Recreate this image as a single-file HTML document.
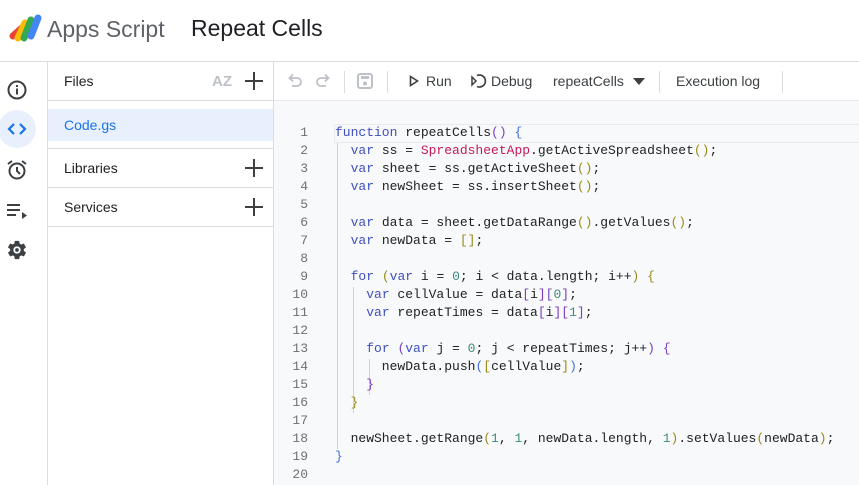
<!DOCTYPE html><html><head><style>
*{margin:0;padding:0;box-sizing:border-box}
body{width:859px;height:485px;overflow:hidden;background:#fff;font-family:"Liberation Sans",sans-serif;color:#3c4043;position:relative}
.a{position:absolute}
.code{font-family:"Liberation Mono",monospace;font-size:13px;color:#202124}
.ln{position:absolute;left:276px;width:32px;text-align:right;color:#6e7072;font-family:"Liberation Mono",monospace;font-size:13px;line-height:18px}
.l{position:absolute;left:335px;white-space:pre;height:18px;line-height:18px}
.k{color:#3f4fc0}.s{color:#c2185b}.n{color:#3d8b7d}.b1{color:#3f6fd8}.b2{color:#9a8a1a}.b3{color:#7b3fc0}
</style></head><body>
<!-- header -->
<svg class="a" style="left:9px;top:14px" width="34" height="30" viewBox="0 0 34 30">
<path d="M4 22 L13 14" stroke="#ea4335" stroke-width="7" stroke-linecap="round"/>
<path d="M9 24 L16 9" stroke="#fbbc04" stroke-width="7" stroke-linecap="round"/>
<path d="M15 24 L22 6" stroke="#34a853" stroke-width="7" stroke-linecap="round"/>
<path d="M22 22 L29 4" stroke="#4285f4" stroke-width="7" stroke-linecap="round"/>
</svg>
<div class="a" style="left:47px;top:16px;font-size:23px;color:#5f6368">Apps Script</div>
<div class="a" style="left:191px;top:15px;font-size:23px;color:#202124">Repeat Cells</div>
<div class="a" style="left:0;top:61px;width:859px;height:1px;background:#dadce0"></div>
<!-- rail -->
<div class="a" style="left:47px;top:62px;width:1px;height:423px;background:#dadce0"></div>
<svg class="a" style="left:6px;top:79px" width="22" height="22" viewBox="0 0 22 22"><circle cx="11" cy="11" r="8.5" fill="none" stroke="#3c4043" stroke-width="2"/><rect x="10" y="9.5" width="2" height="6" fill="#3c4043"/><rect x="10" y="6" width="2" height="2" fill="#3c4043"/></svg>
<div class="a" style="left:-2px;top:110px;width:38px;height:38px;border-radius:50%;background:#e8f0fe"></div>
<svg class="a" style="left:6px;top:119px" width="22" height="20" viewBox="0 0 22 20"><path d="M8 5 L3 10 L8 15 M14 5 L19 10 L14 15" fill="none" stroke="#1a73e8" stroke-width="2.2"/></svg>
<svg class="a" style="left:6px;top:159px" width="22" height="22" viewBox="0 0 22 22"><circle cx="11" cy="12" r="7.5" fill="none" stroke="#3c4043" stroke-width="2"/><path d="M11 8 V12 L14 15 M2 5 L6 2 M20 5 L16 2" fill="none" stroke="#3c4043" stroke-width="2"/></svg>
<svg class="a" style="left:7px;top:202px" width="22" height="18" viewBox="0 0 22 18"><path d="M0 3 H13 M0 8 H13 M0 13 H9" stroke="#3c4043" stroke-width="2"/><path d="M15 10 L20 13.5 L15 17Z" fill="#3c4043"/></svg>
<svg class="a" style="left:6px;top:239px" width="22" height="22" viewBox="0 0 24 24"><path fill="#3c4043" d="M19.4 13c.04-.3.06-.6.06-1s-.02-.7-.06-1l2.1-1.6c.2-.15.24-.42.12-.64l-2-3.460c-.12-.22-.39-.3-.61-.22l-2.5 1c-.52-.4-1.08-.73-1.690-.98l-.38-2.650A.49.49 0 0 0 14 2h-4c-.25 0-.46.18-.49.42l-.38 2.65c-.61.25-1.17.59-1.69.98l-2.5-1c-.23-.09-.49 0-.61.22l-2 3.46c-.13.22-.07.49.12.64L4.57 11c-.04.3-.07.7-.07 1s.02.7.06 1l-2.1 1.6c-.2.15-.25.42-.12.64l2 3.46c.12.22.39.3.61.22l2.5-1c.52.4 1.08.73 1.69.98l.38 2.65c.03.24.24.42.49.42h4c.25 0 .46-.18.49-.42l.38-2.65c.61-.25 1.170-.59 1.690-.98l2.5 1c.23.09.49 0 .61-.22l2-3.46c.12-.22.07-.49-.12-.64L19.4 13zM12 16a4 4 0 1 1 0-8 4 4 0 0 1 0 8zm0-6a2 2 0 1 0 0 4 2 2 0 0 0 0-4z"/></svg>
<!-- files panel -->
<div class="a" style="left:273px;top:62px;width:1px;height:423px;background:#dadce0"></div>
<div class="a" style="left:64px;top:73px;font-size:14px;color:#202124">Files</div>
<div class="a" style="left:212px;top:73px;font-size:15px;font-weight:bold;color:#bdc1c6">AZ</div>
<svg class="a" style="left:245px;top:72px" width="18" height="18"><path d="M9 0V18M0 9H18" stroke="#3c4043" stroke-width="2"/></svg>
<div class="a" style="left:48px;top:100px;width:225px;height:1px;background:#dadce0"></div>
<div class="a" style="left:48px;top:109px;width:225px;height:32px;background:#e8f0fe"></div>
<div class="a" style="left:64px;top:117px;font-size:14px;color:#1a73e8">Code.gs</div>
<div class="a" style="left:48px;top:148px;width:225px;height:1px;background:#dadce0"></div>
<div class="a" style="left:64px;top:160px;font-size:14px;color:#202124">Libraries</div>
<svg class="a" style="left:245px;top:159px" width="18" height="18"><path d="M9 0V18M0 9H18" stroke="#3c4043" stroke-width="2"/></svg>
<div class="a" style="left:48px;top:187px;width:225px;height:1px;background:#dadce0"></div>
<div class="a" style="left:64px;top:199px;font-size:14px;color:#202124">Services</div>
<svg class="a" style="left:245px;top:198px" width="18" height="18"><path d="M9 0V18M0 9H18" stroke="#3c4043" stroke-width="2"/></svg>
<div class="a" style="left:48px;top:226px;width:225px;height:1px;background:#dadce0"></div>
<!-- toolbar -->
<svg class="a" style="left:287px;top:73px" width="44" height="16" viewBox="0 0 44 16"><path d="M4 5 H10 a4 4 0 0 1 0 8 H5 M6 1.5 L2.5 5 L6 8.5" fill="none" stroke="#bdc1c6" stroke-width="1.8"/><path d="M40 5 H34 a4 4 0 0 0 0 8 H39 M38 1.5 L41.5 5 L38 8.5" fill="none" stroke="#bdc1c6" stroke-width="1.8"/></svg>
<div class="a" style="left:344px;top:71px;width:1px;height:22px;background:#dadce0"></div>
<svg class="a" style="left:357px;top:73px" width="16" height="16" viewBox="0 0 16 16"><rect x="1" y="1" width="14" height="14" rx="2" fill="none" stroke="#bdc1c6" stroke-width="2"/><rect x="4" y="3" width="8" height="3" fill="#bdc1c6"/><circle cx="8" cy="10.5" r="2" fill="#bdc1c6"/></svg>
<div class="a" style="left:387px;top:71px;width:1px;height:22px;background:#dadce0"></div>
<svg class="a" style="left:409px;top:75px" width="10" height="12" viewBox="0 0 10 12"><path d="M1.5 1.5 L8.5 6 L1.5 10.5Z" fill="none" stroke="#3c4043" stroke-width="1.6"/></svg>
<div class="a" style="left:426px;top:73px;font-size:14px;color:#3c4043">Run</div>
<svg class="a" style="left:470px;top:73px" width="18" height="16" viewBox="0 0 18 16"><path d="M7 2.5 A6 6 0 1 1 7 13.5" fill="none" stroke="#3c4043" stroke-width="1.7"/><path d="M2 4 L6 8 L2 12Z" fill="none" stroke="#3c4043" stroke-width="1.5"/></svg>
<div class="a" style="left:491px;top:73px;font-size:14px;color:#3c4043">Debug</div>
<div class="a" style="left:553px;top:73px;font-size:14px;color:#3c4043">repeatCells</div>
<svg class="a" style="left:633px;top:78px" width="12" height="7"><path d="M0 0 H12 L6 7Z" fill="#3c4043"/></svg>
<div class="a" style="left:659px;top:71px;width:1px;height:22px;background:#dadce0"></div>
<div class="a" style="left:676px;top:73px;font-size:14px;color:#3c4043">Execution log</div>
<div class="a" style="left:782px;top:71px;width:1px;height:22px;background:#dadce0"></div>
<div class="a" style="left:274px;top:100px;width:585px;height:1px;background:#e8eaed"></div>
<!-- editor -->
<div class="a" style="left:274px;top:101px;width:585px;height:384px;background:#f8f9fa"></div>
<div class="a" style="left:334px;top:124px;width:525px;height:19px;border:1px solid #e8eaed;border-right:none"></div>
<div class="a" style="left:337px;top:143px;width:1px;height:306px;background:#d0d0d0"></div>
<div class="a" style="left:353px;top:287px;width:1px;height:126px;background:#d0d0d0"></div>
<div class="a" style="left:369px;top:359px;width:1px;height:36px;background:#d0d0d0"></div>
<div class="code">
<div class="ln" style="top:124px">1</div><div class="ln" style="top:142px">2</div><div class="ln" style="top:160px">3</div><div class="ln" style="top:178px">4</div><div class="ln" style="top:196px">5</div><div class="ln" style="top:214px">6</div><div class="ln" style="top:232px">7</div><div class="ln" style="top:250px">8</div><div class="ln" style="top:268px">9</div><div class="ln" style="top:286px">10</div><div class="ln" style="top:304px">11</div><div class="ln" style="top:322px">12</div><div class="ln" style="top:340px">13</div><div class="ln" style="top:358px">14</div><div class="ln" style="top:376px">15</div><div class="ln" style="top:394px">16</div><div class="ln" style="top:412px">17</div><div class="ln" style="top:430px">18</div><div class="ln" style="top:448px">19</div><div class="ln" style="top:466px">20</div>
<div class="l" style="top:124px"><span class="k">function</span> repeatCells<span class="b3">()</span> <span class="b1">{</span></div>
<div class="l" style="top:142px">  <span class="k">var</span> ss = <span class="s">SpreadsheetApp</span>.getActiveSpreadsheet<span class="b2">()</span>;</div>
<div class="l" style="top:160px">  <span class="k">var</span> sheet = ss.getActiveSheet<span class="b2">()</span>;</div>
<div class="l" style="top:178px">  <span class="k">var</span> newSheet = ss.insertSheet<span class="b2">()</span>;</div>
<div class="l" style="top:214px">  <span class="k">var</span> data = sheet.getDataRange<span class="b2">()</span>.getValues<span class="b2">()</span>;</div>
<div class="l" style="top:232px">  <span class="k">var</span> newData = <span class="b2">[]</span>;</div>
<div class="l" style="top:268px">  <span class="k">for</span> <span class="b2">(</span><span class="k">var</span> i = <span class="n">0</span>; i &lt; data.length; i++<span class="b2">)</span> <span class="b2">{</span></div>
<div class="l" style="top:286px">    <span class="k">var</span> cellValue = data<span class="b3">[</span>i<span class="b3">][</span><span class="n">0</span><span class="b3">]</span>;</div>
<div class="l" style="top:304px">    <span class="k">var</span> repeatTimes = data<span class="b3">[</span>i<span class="b3">][</span><span class="n">1</span><span class="b3">]</span>;</div>
<div class="l" style="top:340px">    <span class="k">for</span> <span class="b3">(</span><span class="k">var</span> j = <span class="n">0</span>; j &lt; repeatTimes; j++<span class="b3">)</span> <span class="b3">{</span></div>
<div class="l" style="top:358px">      newData.push<span class="b1">(</span><span class="b2">[</span>cellValue<span class="b2">]</span><span class="b1">)</span>;</div>
<div class="l" style="top:376px">    <span class="b3">}</span></div>
<div class="l" style="top:394px">  <span class="b2">}</span></div>
<div class="l" style="top:430px">  newSheet.getRange<span class="b2">(</span><span class="n">1</span>, <span class="n">1</span>, newData.length, <span class="n">1</span><span class="b2">)</span>.setValues<span class="b2">(</span>newData<span class="b2">)</span>;</div>
<div class="l" style="top:448px"><span class="b1">}</span></div>
</div>
</body></html>
